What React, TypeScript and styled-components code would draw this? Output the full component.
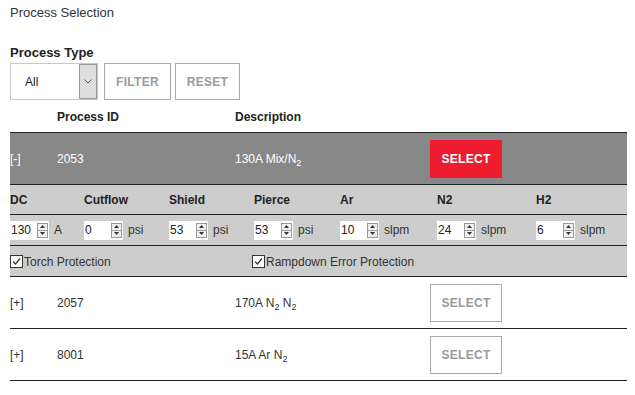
import React from "react";
import styled, { createGlobalStyle } from "styled-components";

const Global = createGlobalStyle`
  html, body { margin: 0; padding: 0; background: #fff; }
  body { font-family: "Liberation Sans", Arial, sans-serif; font-size: 12px; color: #333; }
`;

const Page = styled.div`
  padding: 5px 8px 0 10px;
  width: 617px;
`;

const Title = styled.div`
  font-size: 13px;
  color: #333;
  line-height: 16px;
`;

const Label = styled.div`
  margin-top: 24px;
  font-size: 13px;
  font-weight: bold;
  color: #222;
  line-height: 16px;
`;

const FilterBar = styled.div`
  display: flex;
  gap: 4px;
  margin-top: 2px;
`;

const SelectBox = styled.div`
  width: 86px;
  height: 35px;
  border: 1px solid #c8c8c8;
  display: flex;
  background: #fff;
  margin-right: 2px;
`;

const SelectValue = styled.div`
  flex: 1;
  display: flex;
  align-items: center;
  padding-left: 14px;
  font-size: 12px;
  color: #222;
`;

const SelectArrow = styled.div`
  width: 16px;
  background: #ddd;
  border: 1px solid #999;
  display: flex;
  align-items: center;
  justify-content: center;
`;

const OutlineButton = styled.button<{ $w: number }>`
  width: ${(p) => p.$w}px;
  height: 37px;
  border: 1px solid #a9a9a9;
  background: #fff;
  color: #9a9a9a;
  font-family: "Liberation Sans", Arial, sans-serif;
  font-weight: bold;
  font-size: 12px;
  letter-spacing: 0.3px;
  padding: 0;
  margin: 0;
`;

const cols = "47px 178px 195px 72px 1fr";

const HeaderRow = styled.div`
  display: grid;
  grid-template-columns: ${cols};
  height: 32px;
  align-items: center;
  font-weight: bold;
  font-size: 12px;
  color: #222;
  padding-top: 2px;
  box-sizing: border-box;
`;

const Table = styled.div`
  border-top: 1px solid #222;
`;

const Row = styled.div<{ $active?: boolean }>`
  display: grid;
  grid-template-columns: ${cols};
  height: 51px;
  align-items: center;
  border-bottom: 1px solid #222;
  background: ${(p) => (p.$active ? "#888" : "#fff")};
  color: ${(p) => (p.$active ? "#fff" : "#333")};
  font-size: 12px;
`;

const SelectButton = styled.button<{ $active?: boolean }>`
  width: 72px;
  height: 38px;
  padding: 0;
  font-family: "Liberation Sans", Arial, sans-serif;
  font-weight: bold;
  font-size: 12px;
  letter-spacing: 0.3px;
  border: ${(p) => (p.$active ? "none" : "1px solid #a9a9a9")};
  background: ${(p) => (p.$active ? "#ed1c2e" : "#fff")};
  color: ${(p) => (p.$active ? "#fff" : "#9a9a9a")};
`;

const Detail = styled.div`
  background: #cdcdcd;
`;

const paramCols = "74px 85px 85px 86px 97px 99px 1fr";

const ParamHeader = styled.div`
  display: grid;
  grid-template-columns: ${paramCols};
  height: 29px;
  align-items: center;
  border-bottom: 1px solid #222;
  font-weight: bold;
  font-size: 12px;
  color: #222;
`;

const ParamInputs = styled.div`
  display: grid;
  grid-template-columns: ${paramCols};
  height: 30px;
  align-items: center;
  border-bottom: 1px solid #222;
`;

const ParamCell = styled.div`
  display: flex;
  align-items: center;
  gap: 5px;
  font-size: 12px;
  color: #333;
`;

const NumInput = styled.div`
  width: 39px;
  height: 19px;
  background: #fff;
  display: flex;
  align-items: center;
  justify-content: space-between;
  box-sizing: border-box;
  padding-left: 1px;
  padding-right: 1px;
  font-size: 12px;
  color: #222;
`;

const Spinner = styled.div`
  width: 11px;
  height: 15px;
  border: 1px solid #9a9a9a;
  box-sizing: border-box;
  display: flex;
  flex-direction: column;
  background: #f0f0f0;
`;

const SpinHalf = styled.div<{ $top?: boolean }>`
  flex: 1;
  display: flex;
  align-items: center;
  justify-content: center;
  border-bottom: ${(p) => (p.$top ? "1px solid #9a9a9a" : "none")};
`;

const Checks = styled.div`
  display: grid;
  grid-template-columns: 242px 1fr;
  height: 31px;
  align-items: center;
  border-bottom: 1px solid #222;
  font-size: 12px;
  color: #333;
  padding-top: 1px;
  box-sizing: border-box;
`;

const CheckLabel = styled.div`
  display: flex;
  align-items: center;
`;

const Box = styled.span`
  width: 11px;
  height: 11px;
  border: 1px solid #333;
  background: #fff;
  display: inline-flex;
  align-items: center;
  justify-content: center;
  margin-right: 1px;
`;

const Sub = styled.sub`
  font-size: 9px;
  vertical-align: -3px;
  line-height: 0;
`;

const Spin = () => (
  <Spinner>
    <SpinHalf $top>
      <svg width="5" height="3" viewBox="0 0 5 3">
        <path d="M0 3 L2.5 0 L5 3 Z" fill="#333" />
      </svg>
    </SpinHalf>
    <SpinHalf>
      <svg width="5" height="3" viewBox="0 0 5 3">
        <path d="M0 0 L2.5 3 L5 0 Z" fill="#333" />
      </svg>
    </SpinHalf>
  </Spinner>
);

const Check = () => (
  <Box>
    <svg width="9" height="9" viewBox="0 0 9 9">
      <path d="M1 4.5 L3.5 7 L8 1.5" fill="none" stroke="#333" strokeWidth="1.2" />
    </svg>
  </Box>
);

const params = [
  { name: "DC", value: "130", unit: "A" },
  { name: "Cutflow", value: "0", unit: "psi" },
  { name: "Shield", value: "53", unit: "psi" },
  { name: "Pierce", value: "53", unit: "psi" },
  { name: "Ar", value: "10", unit: "slpm" },
  { name: "N2", value: "24", unit: "slpm" },
  { name: "H2", value: "6", unit: "slpm" },
];

export default function App() {
  return (
    <Page>
      <Global />
      <Title>Process Selection</Title>
      <Label>Process Type</Label>
      <FilterBar>
        <SelectBox>
          <SelectValue>All</SelectValue>
          <SelectArrow>
            <svg width="8" height="5" viewBox="0 0 8 5">
              <path d="M0.5 0.5 L4 4 L7.5 0.5" fill="none" stroke="#555" strokeWidth="1" />
            </svg>
          </SelectArrow>
        </SelectBox>
        <OutlineButton $w={67}>FILTER</OutlineButton>
        <OutlineButton $w={65}>RESET</OutlineButton>
      </FilterBar>
      <HeaderRow>
        <span />
        <span>Process ID</span>
        <span>Description</span>
        <span />
        <span />
      </HeaderRow>
      <Table>
        <Row $active>
          <span>[-]</span>
          <span>2053</span>
          <span>
            130A Mix/N<Sub>2</Sub>
          </span>
          <SelectButton $active>SELECT</SelectButton>
          <span />
        </Row>
        <Detail>
          <ParamHeader>
            {params.map((p) => (
              <span key={p.name}>{p.name}</span>
            ))}
          </ParamHeader>
          <ParamInputs>
            {params.map((p) => (
              <ParamCell key={p.name}>
                <NumInput>
                  <span>{p.value}</span>
                  <Spin />
                </NumInput>
                <span>{p.unit}</span>
              </ParamCell>
            ))}
          </ParamInputs>
          <Checks>
            <CheckLabel>
              <Check />
              Torch Protection
            </CheckLabel>
            <CheckLabel>
              <Check />
              Rampdown Error Protection
            </CheckLabel>
          </Checks>
        </Detail>
        <Row>
          <span>[+]</span>
          <span>2057</span>
          <span>
            170A N<Sub>2</Sub> N<Sub>2</Sub>
          </span>
          <SelectButton>SELECT</SelectButton>
          <span />
        </Row>
        <Row>
          <span>[+]</span>
          <span>8001</span>
          <span>
            15A Ar N<Sub>2</Sub>
          </span>
          <SelectButton>SELECT</SelectButton>
          <span />
        </Row>
      </Table>
    </Page>
  );
}
